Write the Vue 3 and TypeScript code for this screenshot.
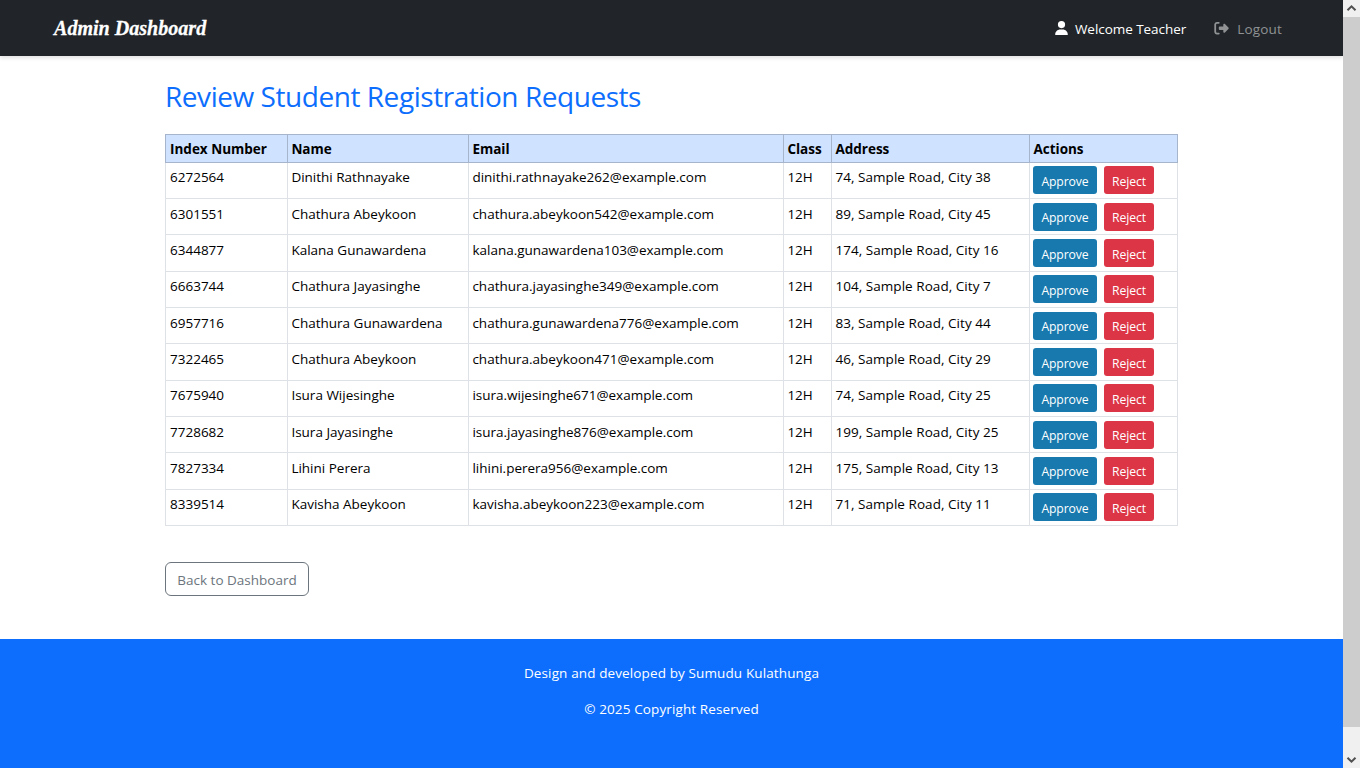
<script setup lang="ts">
interface Student {
  index: string
  name: string
  email: string
  grade: string
  address: string
}

const headings: string[] = ['Index Number', 'Name', 'Email', 'Class', 'Address', 'Actions']

const raw: [string, string, number, string][] = [
  ['6272564', 'Dinithi Rathnayake', 262, '74, Sample Road, City 38'],
  ['6301551', 'Chathura Abeykoon', 542, '89, Sample Road, City 45'],
  ['6344877', 'Kalana Gunawardena', 103, '174, Sample Road, City 16'],
  ['6663744', 'Chathura Jayasinghe', 349, '104, Sample Road, City 7'],
  ['6957716', 'Chathura Gunawardena', 776, '83, Sample Road, City 44'],
  ['7322465', 'Chathura Abeykoon', 471, '46, Sample Road, City 29'],
  ['7675940', 'Isura Wijesinghe', 671, '74, Sample Road, City 25'],
  ['7728682', 'Isura Jayasinghe', 876, '199, Sample Road, City 25'],
  ['7827334', 'Lihini Perera', 956, '175, Sample Road, City 13'],
  ['8339514', 'Kavisha Abeykoon', 223, '71, Sample Road, City 11'],
]

const students: Student[] = raw.map(([index, name, num, address]) => ({
  index,
  name,
  email: `${name.toLowerCase().replace(' ', '.')}${num}@example.com`,
  grade: '12H',
  address,
}))
</script>

<template>
  <div class="window">
    <div class="page">
      <nav class="navbar">
        <a class="brand">Admin Dashboard</a>
        <div class="links">
          <a class="link welcome">
            <svg class="user-icon" viewBox="0 0 448 512"><path fill="currentColor" d="M224 256A128 128 0 1 0 224 0a128 128 0 1 0 0 256zm-45.700 48C79.800 304 0 383.800 0 482.300C0 498.700 13.300 512 29.700 512H418.300c16.400 0 29.700-13.300 29.700-29.700C448 383.800 368.200 304 269.700 304H178.300z" /></svg>
            <span>Welcome Teacher</span>
          </a>
          <a class="link logout">
            <svg class="exit-icon" viewBox="0 0 512 512"><path fill="currentColor" d="M377.900 105.900L500.700 228.700c7.200 7.200 11.300 17.100 11.300 27.300s-4.100 20.100-11.300 27.300L377.900 406.100c-6.400 6.400-15 9.900-24 9.900c-18.700 0-33.900-15.200-33.900-33.900l0-62.100-128 0c-17.700 0-32-14.300-32-32l0-64c0-17.700 14.300-32 32-32l128 0 0-62.100c0-18.700 15.200-33.900 33.900-33.900c9 0 17.600 3.600 24 9.900zM160 96L96 96c-17.700 0-32 14.300-32 32l0 256c0 17.700 14.300 32 32 32l64 0c17.700 0 32 14.300 32 32s-14.300 32-32 32l-64 0c-53 0-96-43-96-96L0 128C0 75 43 32 96 32l64 0c17.700 0 32 14.300 32 32s-14.300 32-32 32z" /></svg>
            <span>Logout</span>
          </a>
        </div>
      </nav>

      <main class="content">
        <h2 class="title">Review Student Registration Requests</h2>
        <div class="table" role="table">
          <div class="row head" role="row">
            <div v-for="h in headings" :key="h" class="cell" role="columnheader">{{ h }}</div>
          </div>
          <div v-for="s in students" :key="s.index" class="row" role="row">
            <div class="cell">{{ s.index }}</div>
            <div class="cell">{{ s.name }}</div>
            <div class="cell">{{ s.email }}</div>
            <div class="cell">{{ s.grade }}</div>
            <div class="cell address">{{ s.address }}</div>
            <div class="cell actions">
              <button class="btn approve">Approve</button>
              <button class="btn reject">Reject</button>
            </div>
          </div>
        </div>
        <button class="back">Back to Dashboard</button>
      </main>

      <footer class="footer">
        <p>Design and developed by Sumudu Kulathunga</p>
        <p>© 2025 Copyright Reserved</p>
      </footer>
    </div>

    <div class="scrollbar">
      <svg class="arrow" viewBox="0 0 17 17"><path d="M4.500 10.300 8.500 6.300 12.500 10.300" /></svg>
      <div class="thumb"></div>
      <svg class="arrow" viewBox="0 0 17 17"><path d="M4.500 6.700 8.500 10.700 12.500 6.700" /></svg>
    </div>
  </div>
</template>

<style>
body {
  margin: 0;
  overflow: hidden;
}
</style>

<style scoped>
.window {
  display: flex;
  width: 1360px;
  height: 768px;
  background: #fff;
  color: #000;
  font-family: 'Open Sans', 'Noto Sans', sans-serif;
  font-size: 13.5px;
  line-height: 21.6px;
}
.page {
  display: flex;
  flex-direction: column;
  width: 1343px;
}
.navbar {
  display: flex;
  align-items: center;
  justify-content: space-between;
  box-sizing: border-box;
  height: 56px;
  padding: 0 61px 0 54px;
  background: #212529;
  box-shadow: 0 2px 4px rgba(0, 0, 0, 0.12);
}
.brand {
  font: italic 700 22px/30px 'Liberation Serif', serif;
  color: #fff;
  white-space: nowrap;
  transform: scaleX(0.912);
  transform-origin: left center;
  -webkit-text-stroke: 0.3px #fff;
}
.links {
  display: flex;
  gap: 28px;
}
.link {
  display: flex;
  align-items: center;
  color: #fff;
  white-space: nowrap;
}
.link span {
  padding-top: 3px;
  letter-spacing: -0.050px;
}
.logout {
  color: #909294;
}
.logout span {
  letter-spacing: 0.180px;
}
.user-icon {
  width: 13px;
  height: 14.400px;
  margin-right: 7px;
}
.exit-icon {
  width: 15px;
  height: 14.400px;
  margin-right: 8px;
}
.content {
  flex: none;
  box-sizing: border-box;
  width: 1013px;
  height: 583px;
  margin-left: 165px;
  padding-top: 23px;
}
.title {
  height: 34px;
  margin: 0 0 21px;
  font-size: 28px;
  font-weight: 400;
  line-height: 34px;
  letter-spacing: -0.450px;
  color: #0d6efd;
  white-space: nowrap;
}
.table {
  box-sizing: border-box;
  width: 1013px;
  height: 391.800px;
}
.row {
  display: grid;
  grid-template-columns: 122px 181px 315px 48px 198px 149px;
  height: 36.300px;
}
.cell {
  box-sizing: border-box;
  padding: 4.580px 0 0 3.400px;
  border-left: 1px solid #dee2e6;
  border-bottom: 1px solid #dee2e6;
  white-space: nowrap;
}
.cell:first-child {
  padding-left: 4px;
}
.cell:last-child {
  border-right: 1px solid #dee2e6;
}
.address {
  letter-spacing: 0.050px;
}
.head {
  height: 28.850px;
}
.head .cell {
  padding-top: 3.600px;
  border-color: #a6b5cc;
  border-top: 1px solid #a6b5cc;
  background: #cfe2ff;
  font-weight: 700;
}
.row .actions {
  display: flex;
  gap: 7px;
  padding: 3.600px 0 0 3px;
}
.btn {
  box-sizing: border-box;
  height: 28px;
  padding: 2.300px 0 0;
  border: 0;
  border-radius: 3px;
  color: #fff;
  font: 400 12.200px/25px 'Open Sans', 'Noto Sans', sans-serif;
  letter-spacing: -0.100px;
}
.approve {
  width: 64px;
  background: #1779ae;
}
.reject {
  width: 50px;
  background: #dc3545;
}
.back {
  display: block;
  box-sizing: border-box;
  width: 144px;
  height: 34px;
  margin-top: 36.200px;
  padding: 2px 0 0;
  border: 1px solid #6c757d;
  border-radius: 6px;
  background: transparent;
  color: #6c757d;
  font: 400 13.500px/30px 'Open Sans', 'Noto Sans', sans-serif;
}
.footer {
  flex: 1;
  padding-top: 24px;
  background: #0d6efd;
  color: #fff;
  text-align: center;
  letter-spacing: 0.120px;
}
.footer p {
  margin: 0 0 14.400px;
}
.scrollbar {
  display: flex;
  flex-direction: column;
  justify-content: space-between;
  width: 17px;
  background: #f0f0f0;
}
.thumb {
  height: 710px;
  margin-bottom: auto;
  background: #cdcdcd;
}
.arrow {
  flex: none;
  width: 17px;
  height: 17px;
}
.arrow path {
  fill: none;
  stroke: #505050;
  stroke-width: 2;
}
</style>
